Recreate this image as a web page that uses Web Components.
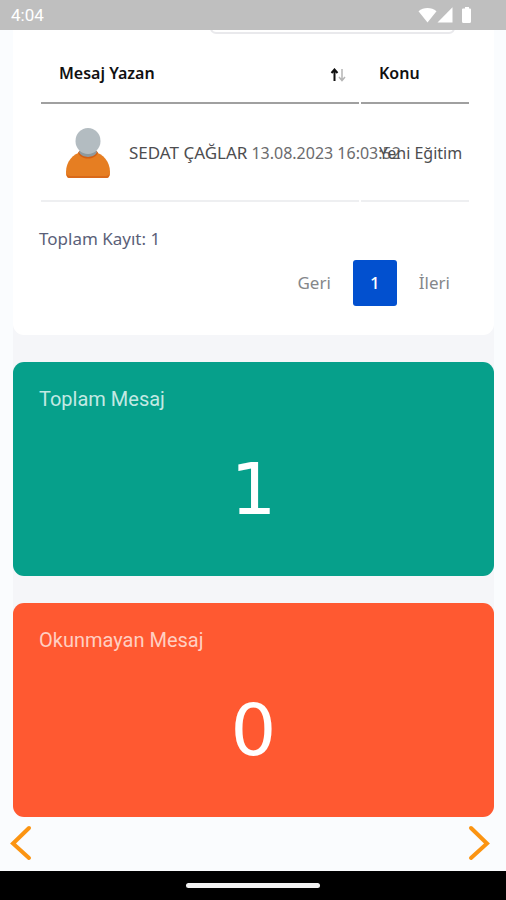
<!DOCTYPE html>
<html lang="tr">
<head>
<meta charset="utf-8">
<meta name="viewport" content="width=device-width, initial-scale=1">
<title>Mesajlar</title>
<style>
  body { margin: 0; background: #fafcfe; font: 17px/24px "Noto Sans", sans-serif; color: #4d4d4f; }
</style>
</head>
<body>
<message-app></message-app>

<template id="status-bar">
  <style>
    :host { display: flex; align-items: center; justify-content: space-between; height: 30px; padding: 0 33px 0 11px; background: #bfbfbf; color: #fff; font: 17px/20px Roboto, sans-serif; }
    svg { display: block; fill: #fff; }
  </style>
  <span>4:04</span>
  <svg width="55" height="18" viewBox="0 0 55 18" aria-hidden="true">
    <path d="M.5 5.2C5.5.8 13.500.8 18.500 5.200L9.500 16.500z"/>
    <path d="M34.500 1.200V16.500H19.500z"/>
    <path d="M45 2.500h2V1h4v1.500h1q1 0 1 1V15.500q0 1.500-1.500 1.500h-6q-1.500 0-1.500-1.500V3.500q0-1 1-1z"/>
  </svg>
</template>

<template id="message-table">
  <style>
    :host { display: block; background: #fff; border-radius: 0 0 11px 11px; padding: 0 23px 29px 26px; }
    .search { display: flex; align-items: flex-end; justify-content: flex-end; height: 4px; overflow: hidden; padding-right: 16px; }
    input { box-sizing: border-box; flex: none; width: 59%; height: 44px; border: 2px solid #e9e9ec; border-radius: 6px; background: #fff; font: inherit; padding: 0 12px; }
    table { width: 100%; table-layout: fixed; border-collapse: separate; border-spacing: 2px; }
    .topic { width: 108px; }
    th, td { box-sizing: border-box; padding: 0 18px; text-align: left; white-space: nowrap; }
    th { height: 68px; padding-top: 7px; border-bottom: 2px solid #a0a0a0; color: #111; font-weight: 600; font-size: 16px; }
    td { height: 96px; border-bottom: 2px solid #eeeff1; }
    td.subject { font-size: 16px; }
    .row { display: flex; align-items: center; justify-content: space-between; }
    .who { display: flex; align-items: center; padding-left: 6px; }
    .who svg { flex: none; margin-right: 18px; }
    small { font-size: 16px; color: #6b6b6d; margin-left: 4px; }
    button { border: 0; background: none; padding: 4px 0 0; margin-right: -6px; line-height: 0; }
    svg { display: block; }
    .total { margin: 23px 0 9px; color: #5b5f78; }
    nav { display: flex; justify-content: flex-end; padding-right: 3px; }
    nav a { box-sizing: border-box; min-width: 44px; padding: 0 17px; border-radius: 3px; color: #85878a; font-size: 17px; line-height: 46px; text-align: center; text-decoration: none; }
    nav a.prev { padding-right: 22px; }
    nav a.next { padding: 0 18px 0 22px; }
    nav a[aria-current] { background: #0250cf; color: #fff; font-weight: 500; }
  </style>
  <div class="search"><input type="search" aria-label="Ara"></div>
  <table>
    <colgroup><col><col class="topic"></colgroup>
    <thead><tr>
      <th scope="col"><div class="row">Mesaj Yazan
        <button type="button" aria-label="Sırala"><svg width="18" height="14" viewBox="0 0 18 14" fill="none"><path d="M5.500 13V2M2.500 5l3-3.500 3 3.500" stroke="#111" stroke-width="2"/><path d="M13 1v11M10 9l3 3.500L16 9" stroke="#b5b5b5" stroke-width="1.500"/></svg></button></div></th>
      <th scope="col">Konu</th>
    </tr></thead>
    <tbody><tr>
      <td><div class="who">
        <svg width="46" height="52" viewBox="0 0 46 52" aria-hidden="true">
          <path d="M1 45C1 35 8 26 17 25h12c9 1 16 10 16 20 0 4-1 6-4 6H5c-3 0-4-2-4-6z" fill="#e67e22"/>
          <path d="M1.500 46c0 4 1 5 4 5h35c3 0 4-1 4-5-.5 2-1.500 3-4 3h-35c-2.500 0-3.500-1-4-3z" fill="#d9691a"/>
          <path d="M13 25.500c3 8 17 8 20 0l-2-2H15z" fill="#d35f14"/>
          <path d="M14 25c3 6.500 15 6.500 18 0l-3-3H17z" fill="#8f9a9e"/>
          <ellipse cx="23" cy="14" rx="12.500" ry="13" fill="#b3bcc1"/>
        </svg>
        <span>SEDAT ÇAĞLAR<small>13.08.2023 16:03:52</small></span></div></td>
      <td class="subject">Yeni Eğitim</td>
    </tr></tbody>
  </table>
  <p class="total">Toplam Kayıt: 1</p>
  <nav aria-label="Sayfalar"><a class="prev" href="#geri">Geri</a><a href="#1" aria-current="page">1</a><a class="next" href="#ileri">İleri</a></nav>
</template>

<template id="stat-card">
  <style>
    :host { display: block; box-sizing: border-box; min-height: 214px; padding: 25px 26px; border-radius: 11px; background: var(--tone); color: #fff; }
    h2 { margin: 0; font: 400 20px/24px Roboto, sans-serif; color: var(--label); }
    p { margin: 42px 0 0; font: 72px/72px "DejaVu Sans", sans-serif; text-align: center; }
  </style>
  <h2><slot name="label"></slot></h2>
  <p><slot></slot></p>
</template>

<template id="page-arrows">
  <style>
    :host { display: flex; align-items: center; justify-content: space-between; flex: 1; min-height: 50px; padding: 0 15px 2px 9px; }
    button { border: 0; padding: 0; background: none; }
    svg { display: block; fill: none; stroke: #fb9412; stroke-width: 4; stroke-linecap: round; }
  </style>
  <button type="button" aria-label="Önceki"><svg width="24" height="36" viewBox="0 0 24 36"><path d="M20 3L4 18.500 20 33"/></svg></button>
  <button type="button" aria-label="Sonraki"><svg width="24" height="36" viewBox="0 0 24 36"><path d="M4 3l16 15.500L4 33"/></svg></button>
</template>

<template id="home-bar">
  <style>
    :host { display: flex; align-items: center; justify-content: center; height: 29px; background: #000; }
    span { width: 134px; height: 5px; border-radius: 3px; background: #f2f2f2; }
  </style>
  <span></span>
</template>

<template id="message-app">
  <style>
    :host { display: flex; flex-direction: column; min-height: 100vh; }
    main { display: grid; gap: 27px; margin: 0 12px 0 13px; background: #f5f6f9; border-radius: 0 0 12px 12px; }
    .green { --tone: #06a08b; --label: #c3e9e3; }
    .orange { --tone: #ff5931; --label: #ffcfc2; }
  </style>
  <status-bar></status-bar>
  <main>
    <message-table></message-table>
    <stat-card class="green"><span slot="label">Toplam Mesaj</span>1</stat-card>
    <stat-card class="orange"><span slot="label">Okunmayan Mesaj</span>0</stat-card>
  </main>
  <page-arrows></page-arrows>
  <home-bar></home-bar>
</template>

<script>
  class TemplateElement extends HTMLElement {
    constructor() {
      super();
      const template = document.getElementById(this.localName);
      this.attachShadow({ mode: "open" }).append(template.content.cloneNode(true));
    }
  }
  customElements.define("status-bar", class extends TemplateElement {});
  customElements.define("message-table", class extends TemplateElement {});
  customElements.define("stat-card", class extends TemplateElement {});
  customElements.define("page-arrows", class extends TemplateElement {});
  customElements.define("home-bar", class extends TemplateElement {});
  customElements.define("message-app", class extends TemplateElement {});
</script>
</body>
</html>
